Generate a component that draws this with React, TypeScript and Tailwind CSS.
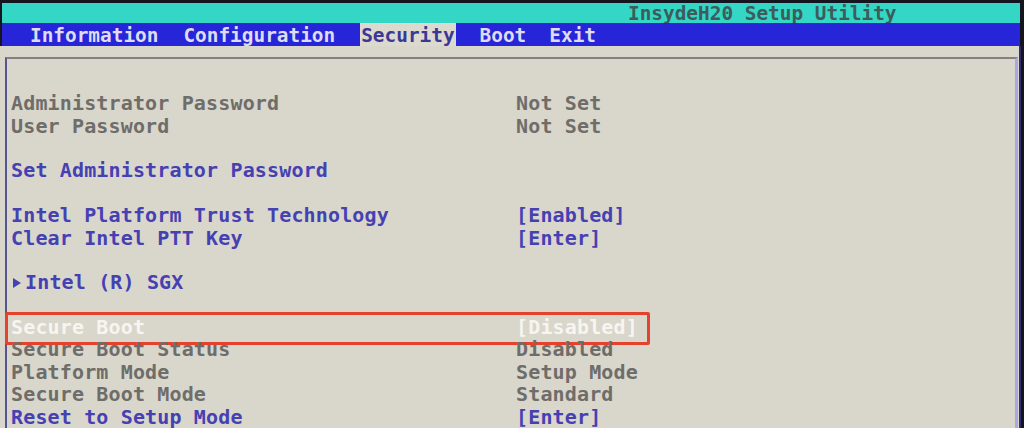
import React from 'react';

type Row = { label: string; value?: string; tone: 'gray' | 'blue' | 'white' | 'none'; sub?: boolean; boxed?: boolean };

const rows: Row[] = [
  { label: 'Administrator Password', value: 'Not Set', tone: 'gray' },
  { label: 'User Password', value: 'Not Set', tone: 'gray' },
  { label: '', tone: 'none' },
  { label: 'Set Administrator Password', tone: 'blue' },
  { label: '', tone: 'none' },
  { label: 'Intel Platform Trust Technology', value: '[Enabled]', tone: 'blue' },
  { label: 'Clear Intel PTT Key', value: '[Enter]', tone: 'blue' },
  { label: '', tone: 'none' },
  { label: 'Intel (R) SGX', tone: 'blue', sub: true },
  { label: '', tone: 'none' },
  { label: 'Secure Boot', value: '[Disabled]', tone: 'white', boxed: true },
  { label: 'Secure Boot Status', value: 'Disabled', tone: 'gray' },
  { label: 'Platform Mode', value: 'Setup Mode', tone: 'gray' },
  { label: 'Secure Boot Mode', value: 'Standard', tone: 'gray' },
  { label: 'Reset to Setup Mode', value: '[Enter]', tone: 'blue' },
];

const toneClass = {
  gray: 'text-[#6f6d69]',
  blue: 'text-[#4541b2]',
  white: 'text-[#f6f5f0]',
  none: '',
};

const App: React.FC = () => {
  return (
    <div className="w-[1024px] h-[428px] overflow-hidden bg-[#15151f] pt-[3px] flex flex-col font-['DejaVu_Sans_Mono','Liberation_Mono',monospace]">
      {/* title bar */}
      <div className="h-[20px] mr-[4px] ml-[2px] bg-[#34d7c6] flex items-center pl-[626px] pt-[1px]">
        <span className="text-[19.4px] leading-none text-[#3d5c5a] font-bold">InsydeH20 Setup Utility</span>
      </div>

      {/* menu bar */}
      <div className="h-[23px] mr-[4px] ml-[2px] bg-[#2626d8] flex items-stretch text-[19.4px] font-bold leading-none">
        <span className="ml-[28px] pt-[3px] flex items-center text-[#dddcf2]">Information</span>
        <span className="ml-[25px] pt-[3px] flex items-center text-[#dddcf2]">Configuration</span>
        <span className="ml-[25px] pt-[3px] px-[1px] flex items-center bg-[#dcd9cf] text-[#3b3796]">Security</span>
        <span className="ml-[24px] pt-[3px] flex items-center text-[#dddcf2]">Boot</span>
        <span className="ml-[23px] pt-[3px] flex items-center text-[#dddcf2]">Exit</span>
      </div>

      {/* body */}
      <div className="flex-1 bg-[#d9d6cc] mr-[3px] pt-[11px] border-r-[2px] border-[#2e2e6e]">
        <div className="h-full ml-[5px] mr-[1px] border-t-[2px] border-t-[#857f80] border-l-[2px] border-l-[#555590] border-r-[3px] border-r-[#a9a8e6] pt-[33px] pl-[4px]">
          {rows.map((r, i) => (
            <div key={i} className={`relative h-[22.4px] grid grid-cols-[505px_1fr] items-center text-[20px] tracking-[0.15px] font-bold leading-none ${toneClass[r.tone]}`}>
              <span className="whitespace-pre flex items-center">
                {r.sub && (
                  <svg width="12" height="12" viewBox="0 0 12 12" className="mr-[2px] mt-[1px]">
                    <polygon points="2,1 10,6 2,11" fill="#4541b2" />
                  </svg>
                )}
                {r.label}
              </span>
              <span className="whitespace-pre">{r.value ?? ''}</span>
              {r.boxed && (
                <div className="absolute -left-[6px] -top-[4px] -bottom-[7px] w-[645px] border-[3px] border-[#e4422c] rounded-[2px]" />
              )}
            </div>
          ))}
        </div>
      </div>
    </div>
  );
};

export default App;
